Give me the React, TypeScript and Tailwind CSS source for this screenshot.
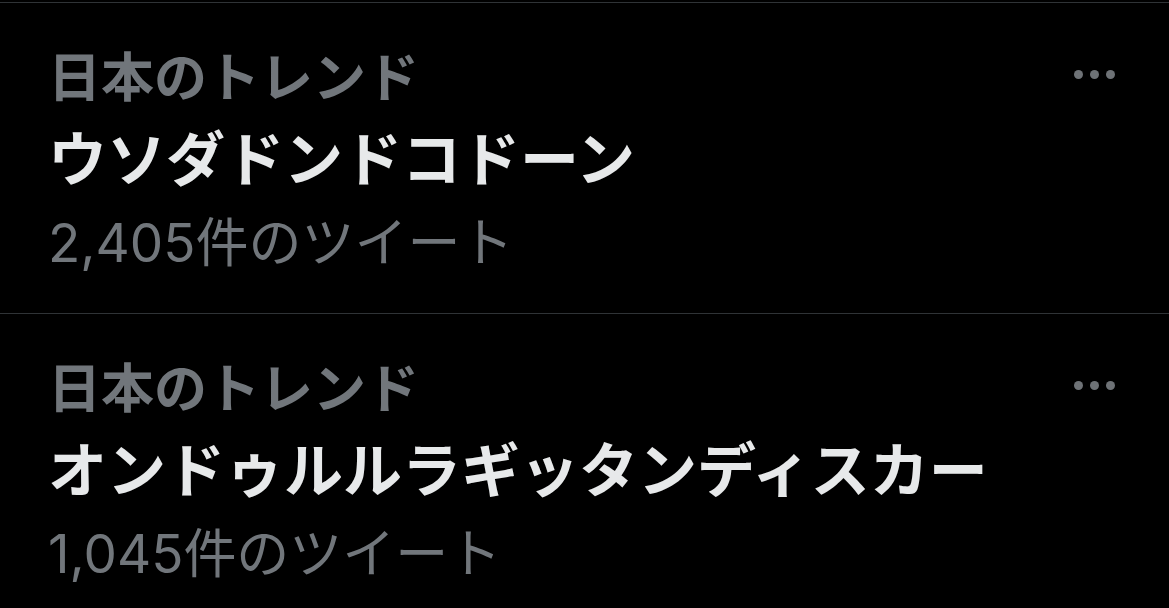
import React from "react";

const items = [
  { title: "ウソダドンドコドーン", count: "2,405" },
  { title: "オンドゥルルラギッタンディスカー", count: "1,045" },
];

function Dots() {
  return (
    <div className="flex items-center gap-[7px]">
      <span className="block w-[9px] h-[9px] rounded-full bg-[#6e7276]" />
      <span className="block w-[9px] h-[9px] rounded-full bg-[#6e7276]" />
      <span className="block w-[9px] h-[9px] rounded-full bg-[#6e7276]" />
    </div>
  );
}

export default function App() {
  return (
    <div
      className="w-[1169px] h-[608px] overflow-hidden bg-black pt-[2px]"
      style={{ fontFamily: '"Noto Sans CJK JP", sans-serif' }}
    >
      {items.map((it, i) => (
        <div key={i} className="border-t border-[#2f3336] pl-[48px] pr-[54px] pt-[40px] pb-[24px]">
          <div className="flex items-center justify-between h-[62px]">
            <div className="text-[53px] leading-[62px] text-[#71767b] font-semibold">日本のトレンド</div>
            <Dots />
          </div>
          <div className="mt-[10px] text-[59px] leading-[82px] font-bold text-[#e7e9ea] whitespace-nowrap">
            {it.title}
          </div>
          <div
            className="text-[53px] leading-[92px] text-[#71767b] whitespace-nowrap"
            style={{ fontFamily: 'Inter, "Noto Sans CJK JP", sans-serif' }}
          >
            {it.count}件のツイート
          </div>
        </div>
      ))}
    </div>
  );
}
